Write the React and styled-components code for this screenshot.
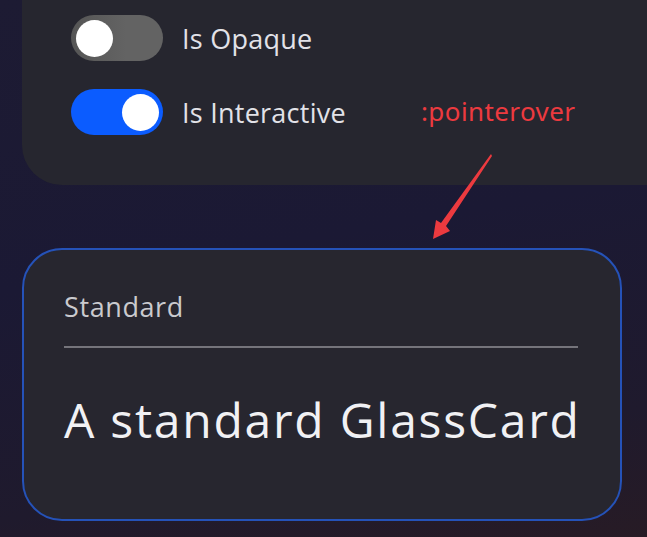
import styled, { createGlobalStyle } from "styled-components";

const GlobalStyle = createGlobalStyle`
  html, body {
    margin: 0;
    padding: 0;
    background: #1b1932;
  }
  * {
    box-sizing: border-box;
  }
`

const Page = styled.div`
  position: relative;
  width: 647px;
  height: 537px;
  overflow: hidden;
  padding-left: 22px;
  background: linear-gradient(170deg, #1d1b33 0%, #1b1934 45%, #1f1a2d 80%, #271b25 100%);
  font-family: "Open Sans", "Noto Sans", sans-serif;
`

const SettingsPanel = styled.div`
  height: 185px;
  padding: 15px 0 0 49px;
  background: #26262f;
  border-radius: 0 0 0 40px;
  display: flex;
  flex-direction: column;
  gap: 28px;
`

const Row = styled.label`
  display: flex;
  align-items: center;
  gap: 19px;
  font-size: 27px;
  letter-spacing: 0.25px;
  color: #e2e2e8;
`

const Switch = styled.span`
  position: relative;
  width: 92px;
  height: 46px;
  border-radius: 23px;
  background: ${(p) => (p.$on ? "#0b5cff" : "linear-gradient(90deg, #555 0%, #636363 60%)")};

  &::after {
    content: "";
    position: absolute;
    top: 4.5px;
    left: ${(p) => (p.$on ? "51px" : "5px")};
    width: 37px;
    height: 37px;
    border-radius: 50%;
    background: #fff;
  }
`

const GlassCard = styled.div`
  margin-top: 63px;
  width: 600px;
  height: 273px;
  padding: 40px 42px 0 40px;
  background: #27262f;
  border: 2px solid #2552b8;
  border-radius: 40px;
`

const CardLabel = styled.div`
  font-size: 27px;
  line-height: 34px;
  letter-spacing: 0.6px;
  color: #cacace;
`

const Divider = styled.div`
  height: 2px;
  margin-top: 22px;
  background: #75747b;
`

const CardText = styled.div`
  margin-top: 43px;
  font-size: 48px;
  line-height: 58px;
  letter-spacing: 1.75px;
  white-space: nowrap;
  color: #f1f1f4;
`

const Annotation = styled.div`
  position: absolute;
  left: 421px;
  top: 94px;
  font-family: "Noto Sans", sans-serif;
  font-size: 26px;
  line-height: 34px;
  letter-spacing: 0.4px;
  color: #ec3a3f;
`

const ArrowSvg = styled.svg`
  position: absolute;
  left: 0;
  top: 0;
  pointer-events: none;
`

function Toggle({ on, label }) {
  return (
    <Row>
      <Switch $on={on} />
      <span>{label}</span>
    </Row>
  )
}

function App() {
  return (
    <>
      <GlobalStyle />
      <Page>
        <SettingsPanel>
          <Toggle on={false} label="Is Opaque" />
          <Toggle on={true} label="Is Interactive" />
        </SettingsPanel>

        <GlassCard>
          <CardLabel>Standard</CardLabel>
          <Divider />
          <CardText>A standard GlassCard</CardText>
        </GlassCard>

        <Annotation>:pointerover</Annotation>
        <ArrowSvg width="647" height="537" viewBox="0 0 647 537">
          <polygon
            points="491,154 492,156 446,226 450,231 433,239 436,220 441,223"
            fill="#ec3a3f"
          />
        </ArrowSvg>
      </Page>
    </>
  )
}

export default App;
